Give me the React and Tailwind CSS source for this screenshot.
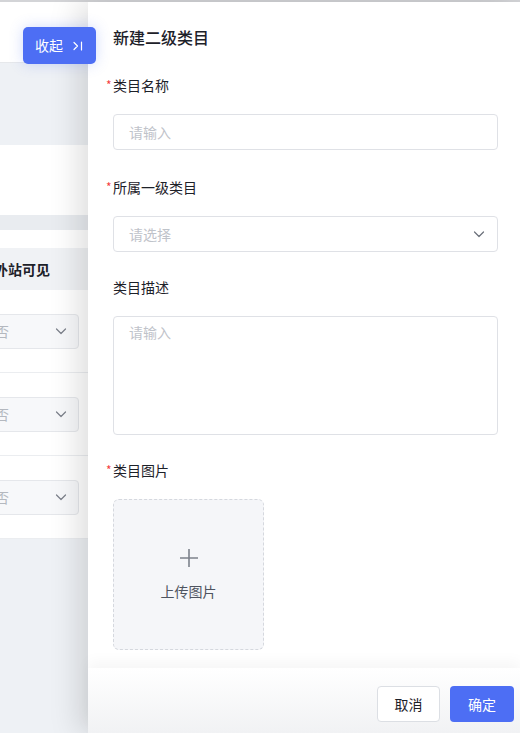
import React from 'react';

const Chevron = ({ className }) => (
  <svg className={className} width="14" height="14" viewBox="0 0 14 14" fill="none">
    <path d="M2.5 5 L7 9.5 L11.5 5" stroke="currentColor" strokeWidth="1.2" strokeLinecap="round" strokeLinejoin="round" />
  </svg>
);

function Label({ required, children }) {
  return (
    <div className="flex items-center h-[22px] text-[14px] leading-[22px] text-[#1d2129]">
      {required ? (
        <span className="w-[7px] ml-[-7px] text-[#f53f3f] text-[12px] leading-none">*</span>
      ) : null}
      <span>{children}</span>
    </div>
  );
}

function LeftRow() {
  return (
    <div className="h-[83px] bg-white border-b border-[#ebedf0] flex items-center">
      <div className="w-[88px] ml-[-9px] flex">
        <div className="h-[35px] w-[88px] rounded-[4px] bg-[#f7f8fa] border border-[#e5e7eb] flex items-center justify-between pl-[3px] pr-[10px]">
          <span className="text-[14px] text-[#b4b8bf]">否</span>
          <Chevron className="text-[#7b808a]" />
        </div>
      </div>
    </div>
  );
}

export default function App() {
  return (
    <div className="relative w-[520px] h-[733px] overflow-hidden bg-white font-['Noto_Sans_CJK_SC',sans-serif]">
      <div className="h-[2px] bg-[#d3d4d7]" />
      <div className="flex h-[731px]">
        {/* background page */}
        <div className="w-[88px] shrink-0 flex flex-col overflow-hidden bg-[#eef1f5]">
          <div className="h-[61px] bg-white border-b border-[#e6e8eb] shrink-0" />
          <div className="h-[82px] shrink-0" />
          <div className="h-[70px] bg-white shrink-0" />
          <div className="h-[15px] bg-[#e9ecf0] shrink-0" />
          <div className="h-[18px] bg-white shrink-0" />
          <div className="h-[42px] bg-[#f0f2f5] flex items-center shrink-0">
            <span className="ml-[-6px] text-[14px] font-semibold text-[#1d2129] whitespace-nowrap">外站可见</span>
          </div>
          <LeftRow />
          <LeftRow />
          <LeftRow />
        </div>

        {/* drawer */}
        <div className="relative z-10 flex-1 flex flex-col bg-white shadow-[-10px_0_28px_rgba(0,0,0,0.13)]">
          <div className="flex-1 overflow-hidden pl-[25px] pr-[22px] pt-[23px]">
            <div className="h-[24px] text-[16px] leading-[24px] font-medium text-[#1d2129] mb-[25px]">新建二级类目</div>

            <Label required>类目名称</Label>
            <div className="mt-[18px] h-[36px] rounded-[4px] border border-[#dfe1e6] flex items-center px-[15px] text-[14px] text-[#bfc3ca]">
              请输入
            </div>

            <div className="mt-[26px]">
              <Label required>所属一级类目</Label>
            </div>
            <div className="mt-[18px] h-[36px] rounded-[4px] border border-[#dfe1e6] flex items-center justify-between pl-[15px] pr-[11px] text-[14px] text-[#bfc3ca]">
              <span>请选择</span>
              <Chevron className="text-[#6b707a]" />
            </div>

            <div className="mt-[24px]">
              <Label>类目描述</Label>
            </div>
            <div className="mt-[18px] h-[119px] rounded-[4px] border border-[#dfe1e6] px-[15px] pt-[5px] text-[14px] text-[#bfc3ca]">
              请输入
            </div>

            <div className="mt-[24px]">
              <Label required>类目图片</Label>
            </div>
            <div className="mt-[18px] w-[151px] h-[151px] rounded-[6px] border border-dashed border-[#d5d8de] bg-[#f5f6f9] flex flex-col items-center justify-center">
              <svg width="20" height="20" viewBox="0 0 20 20" fill="none">
                <path d="M10 1 V19 M1 10 H19" stroke="#7d828c" strokeWidth="1.6" />
              </svg>
              <span className="mt-[13px] text-[14px] leading-[20px] text-[#4e5460]">上传图片</span>
            </div>
            <div className="mt-[14px] text-[13px] leading-[20px] text-[#c9ccd2]">图片大小不超过2M，支持jpg、png格式</div>
          </div>

          <div className="h-[65px] shrink-0 bg-gradient-to-b from-white to-[#f1f2f4] shadow-[0_-6px_14px_rgba(0,0,0,0.04)] flex justify-end items-start pt-[18px] pr-[6px] gap-[10px]">
            <button className="w-[63px] h-[36px] rounded-[4px] border border-[#dcdfe4] bg-white text-[14px] text-[#1d2129]">取消</button>
            <button className="w-[64px] h-[36px] rounded-[4px] bg-[#4d6ef4] text-[14px] text-white">确定</button>
          </div>
        </div>
      </div>

      <button className="absolute left-[23px] top-[27px] z-20 w-[73px] h-[37px] rounded-[5px] bg-[#4d6ef4] shadow-[0_0_14px_rgba(77,110,244,0.25)] flex items-center pl-[12px] gap-[9px] text-[14px] text-white">
        <span>收起</span>
        <svg width="12" height="12" viewBox="0 0 12 12" fill="none">
          <path d="M2 2.5 L5.5 6 L2 9.5 M9.5 2 V10" stroke="white" strokeWidth="1.2" strokeLinecap="round" strokeLinejoin="round" />
        </svg>
      </button>
    </div>
  );
}
